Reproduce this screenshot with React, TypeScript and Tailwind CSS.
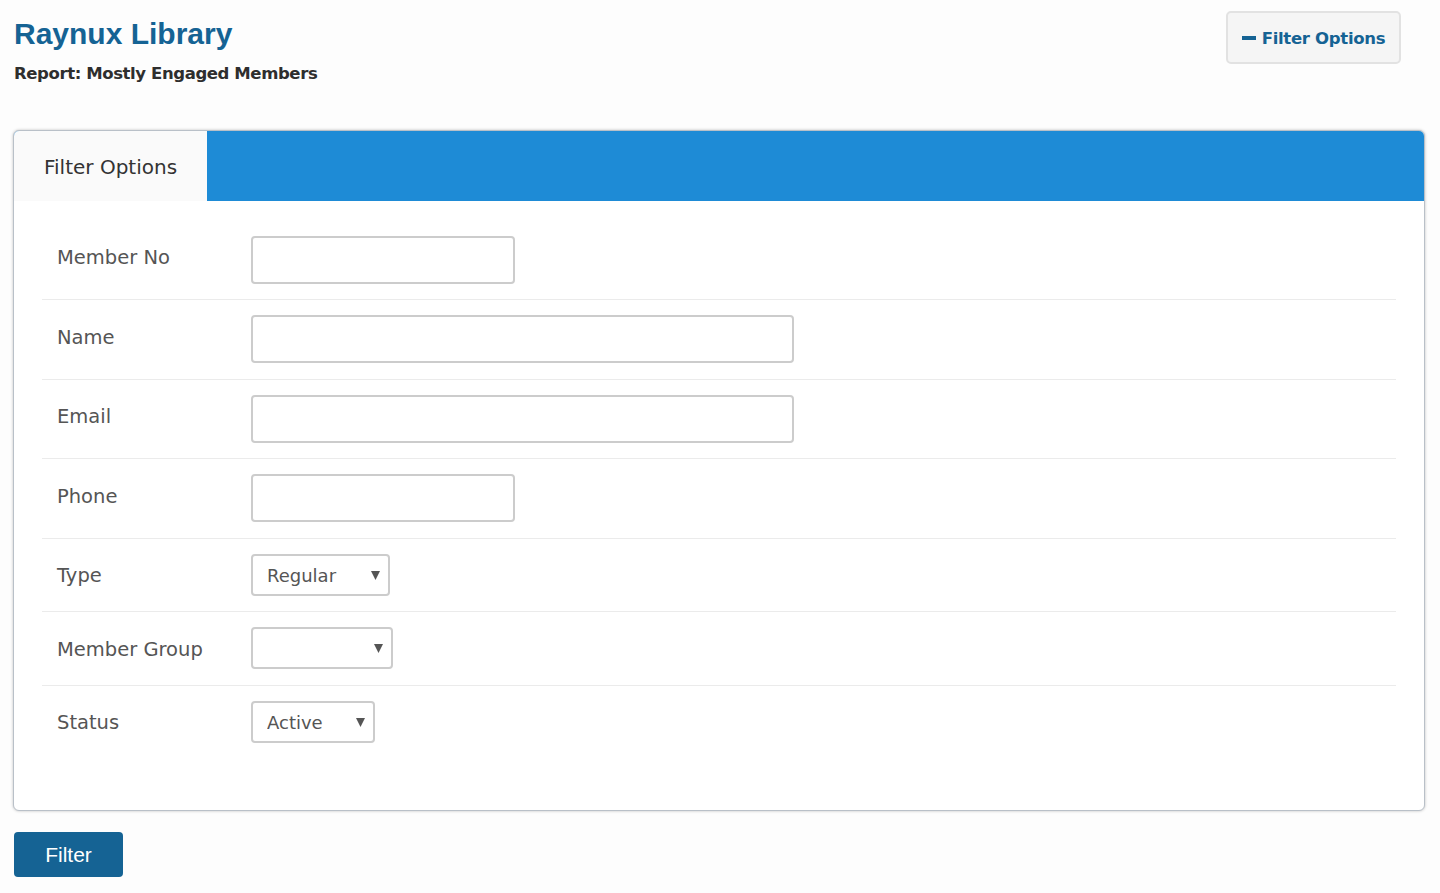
const textRows = [
  { label: "Member No", width: "w-[264px]" },
  { label: "Name", width: "w-[543px]" },
  { label: "Email", width: "w-[543px]" },
  { label: "Phone", width: "w-[264px]" },
];

const selectRows = [
  { label: "Type", width: "w-[139px]", value: "Regular" },
  { label: "Member Group", width: "w-[142px]", value: "" },
  { label: "Status", width: "w-[124px]", value: "Active" },
];

function App() {
  return (
    <div className="min-h-[893px] bg-[#fdfdfd] pl-[13px] pr-[15px] font-['DejaVu_Sans',sans-serif] overflow-hidden">
      <div className="flex justify-between items-start h-[130px]">
        <div className="pt-[15px]">
          <h1 className="font-['Liberation_Sans',sans-serif] font-bold text-[30px] leading-[38px] text-[#156394] pl-px">
            Raynux Library
          </h1>
          <div className="mt-[10px] pl-px text-[16.5px] tracking-[-0.4px] leading-[22px] font-bold text-[#2e2e2e]">
            Report: Mostly Engaged Members
          </div>
        </div>
        <button className="mt-[11px] mr-[24px] w-[175px] h-[53px] rounded-[5px] border-2 border-[#e2e2e2] bg-[#f5f5f5] flex items-center justify-center gap-[6px] text-[16.5px] tracking-[-0.3px] font-bold text-[#156394]">
          <span className="w-[14px] h-[4px] bg-[#156394]"></span>
          <span className="pt-[3px]">Filter Options</span>
        </button>
      </div>

      <div className="h-[681px] rounded-[6px] border border-[#b9c0c8] shadow-[0_0_3px_rgba(0,0,0,0.25)] bg-white overflow-hidden">
        <div className="h-[70px] bg-[#1e8bd6] flex">
          <div className="w-[193px] bg-[#fafafa] flex items-center pl-[30px] pt-[2px] text-[20px] text-[#333333]">
            Filter Options
          </div>
        </div>
        <div className="mx-[28px] mt-[19.5px]">
          {textRows.map((row) => (
            <div key={row.label} className="flex pt-[15px] pb-[15.5px] border-b border-[#ebebeb]">
              <label className="w-[209px] pl-[15px] pt-[6.5px] text-[19.5px] leading-[32px] text-[#555555]">{row.label}</label>
              <input className={`${row.width} h-[48px] rounded-[4px] border-2 border-[#cccccc] bg-white`} />
            </div>
          ))}
          {selectRows.map((row, i) => (
            <div key={row.label} className={`flex pt-[15px] pb-[15.5px] ${i < 2 ? "border-b border-[#ebebeb]" : ""}`}>
              <label className="w-[209px] pl-[15px] pt-[6.5px] text-[19.5px] leading-[32px] text-[#555555]">{row.label}</label>
              <div className={`relative ${row.width} h-[42px]`}>
                <select
                  defaultValue={row.value}
                  className="appearance-none w-full h-full rounded-[4px] border-2 border-[#cccccc] bg-white pl-[14px] pt-[2px] text-[18px] text-[#555555]"
                >
                  <option value={row.value}>{row.value}</option>
                </select>
                <svg className="absolute right-[10px] top-[17px] w-[9px] h-[9px] pointer-events-none" viewBox="0 0 9 9">
                  <path d="M0 0H9L4.5 9Z" fill="#555555" />
                </svg>
              </div>
            </div>
          ))}
        </div>
      </div>

      <button className="mt-[21px] ml-px w-[109px] h-[45px] rounded-[4px] bg-[#156394] text-white text-[21px] font-['Liberation_Sans',sans-serif]">
        Filter
      </button>
    </div>
  );
}

export default App;
